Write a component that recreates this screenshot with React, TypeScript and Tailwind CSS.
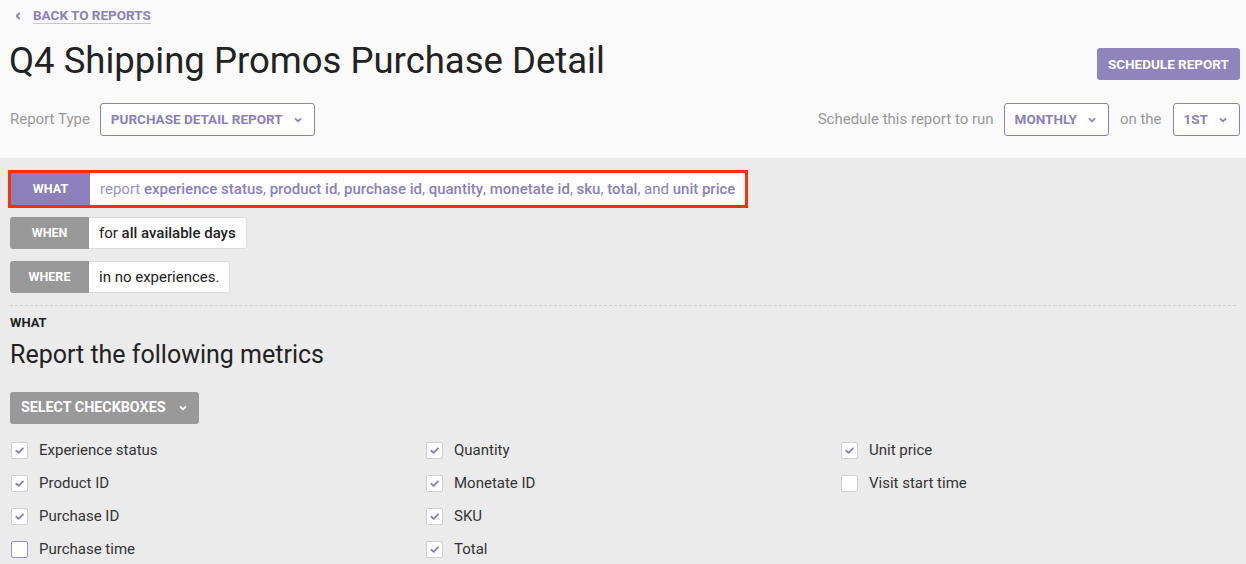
import React from 'react';

const purple = 'text-[#8b80bb]';

const Chevron = ({ className = '' }: { className?: string }) => (
  <svg viewBox="0 0 10 10" className={className} fill="none" stroke="currentColor" strokeWidth="1.8" strokeLinecap="round" strokeLinejoin="round">
    <path d="M2.5 3.8 5 6.3 7.5 3.8" />
  </svg>
);

const Dropdown = ({ label, className = '' }: { label: string; className?: string }) => (
  <button className={`h-[33px] pl-[10px] pr-[11px] flex items-center gap-[10px] bg-white border border-[#8b80bb] rounded-[3px] text-[13.5px] font-bold uppercase ${purple} ${className}`}>
    <span>{label}</span>
    <Chevron className="w-[10px] h-[10px]" />
  </button>
);

const Pill = ({ tag, active, children }: { tag: string; active?: boolean; children: React.ReactNode }) => (
  <div className={`flex h-[32px] ${active ? 'outline-[3px] outline-[#ff2f00] outline outline-offset-0' : ''}`}>
    <div className={`w-[79px] flex items-center justify-center text-[12.5px] font-bold text-white ${active ? 'bg-[#8b80bb]' : 'bg-[#999999] rounded-l-[3px]'}`}>
      {tag}
    </div>
    <div className={`flex items-center px-[10px] bg-white text-[15px] ${active ? '' : 'border border-l-0 border-[#dcdcdc] rounded-r-[3px]'}`}>
      {children}
    </div>
  </div>
);

const Check = ({ label, checked, focus }: { label: string; checked?: boolean; focus?: boolean }) => (
  <div className="h-[33px] flex items-center gap-[11px] pl-[1px]">
    <span className={`w-[17px] h-[17px] bg-white rounded-[2px] border flex items-center justify-center ${focus ? 'border-[#9a90c8]' : 'border-[#cfcfcf]'}`}>
      {checked && (
        <svg viewBox="0 0 12 12" className="w-[11px] h-[11px]" fill="none" stroke="#8b80bb" strokeWidth="2" strokeLinecap="round" strokeLinejoin="round">
          <path d="M2.5 6.3 5 8.6 9.8 3.6" />
        </svg>
      )}
    </span>
    <span className="text-[15px] text-[#333]">{label}</span>
  </div>
);

const columns: { label: string; checked?: boolean; focus?: boolean }[][] = [
  [
    { label: 'Experience status', checked: true },
    { label: 'Product ID', checked: true },
    { label: 'Purchase ID', checked: true },
    { label: 'Purchase time', focus: true },
  ],
  [
    { label: 'Quantity', checked: true },
    { label: 'Monetate ID', checked: true },
    { label: 'SKU', checked: true },
    { label: 'Total', checked: true },
  ],
  [
    { label: 'Unit price', checked: true },
    { label: 'Visit start time' },
  ],
];

const metrics = ['experience status', 'product id', 'purchase id', 'quantity', 'monetate id', 'sku', 'total'];

export default function App() {
  return (
    <div className="w-[1246px] h-[564px] overflow-hidden bg-[#ebebeb] font-['Roboto',_'Liberation_Sans',_sans-serif]">
      <header className="bg-[#fafafa] pl-[10px] pr-[6px] pt-[7px] h-[158px]">
        <a className={`flex items-center gap-[10px] text-[13.5px] font-bold uppercase ${purple} pl-[3px]`}>
          <svg viewBox="0 0 10 10" className="w-[10px] h-[10px] rotate-90" fill="none" stroke="currentColor" strokeWidth="1.8" strokeLinecap="round" strokeLinejoin="round">
            <path d="M2.5 3.8 5 6.3 7.5 3.8" />
          </svg>
          <span className="border-b border-[#c9c3e0] leading-[16px]">Back to reports</span>
        </a>
        <div className="flex items-start justify-between mt-[14px]">
          <h1 className="text-[36.5px] leading-[46px] text-[#222] -ml-[1px]">Q4 Shipping Promos Purchase Detail</h1>
          <button className="mt-[10px] h-[32px] px-[11px] bg-[#8f84bd] rounded-[3px] text-white text-[13.5px] font-bold uppercase">
            Schedule report
          </button>
        </div>
        <div className="flex items-center justify-between mt-[19px]">
          <div className="flex items-center gap-[10px]">
            <span className="text-[15px] text-[#999]">Report Type</span>
            <Dropdown label="Purchase detail report" />
          </div>
          <div className="flex items-center gap-[10px]">
            <span className="text-[15px] text-[#999]">Schedule this report to run</span>
            <Dropdown label="Monthly" />
            <span className="text-[15px] text-[#999] px-[1px]">on the</span>
            <Dropdown label="1st" />
          </div>
        </div>
      </header>

      <main className="px-[10px]">
        <div className="flex flex-col items-start gap-[12px] pt-[15px] pb-[12px] border-b border-dashed border-[#cfcfcf]">
          <div className="ml-[1px]">
            <Pill tag="WHAT" active>
              <span className="text-[#8b80bb]">
                <span className="opacity-85">report </span>
                {metrics.map((m) => (
                  <React.Fragment key={m}>
                    <span className="font-medium">{m}</span>
                    {', '}
                  </React.Fragment>
                ))}
                and <span className="font-medium">unit price</span>
              </span>
            </Pill>
          </div>
          <Pill tag="WHEN">
            <span className="text-[#222]">for <span className="font-medium">all available days</span></span>
          </Pill>
          <Pill tag="WHERE">
            <span className="text-[#222]">in no experiences.</span>
          </Pill>
        </div>

        <div className="pt-[7px]">
          <div className="text-[13px] font-bold text-[#222]">WHAT</div>
          <h2 className="text-[25px] text-[#222] mt-[6px] leading-[32px]">Report the following metrics</h2>
          <button className="mt-[21px] h-[32px] px-[11px] flex items-center gap-[12px] bg-[#999999] rounded-[3px] text-white text-[14.3px] font-bold uppercase">
            Select checkboxes
            <Chevron className="w-[10px] h-[10px]" />
          </button>
          <div className="flex mt-[10px]">
            {columns.map((col, i) => (
              <div key={i} className="w-[415px] shrink-0">
                {col.map((c) => (
                  <Check key={c.label} {...c} />
                ))}
              </div>
            ))}
          </div>
        </div>
      </main>
    </div>
  );
}
